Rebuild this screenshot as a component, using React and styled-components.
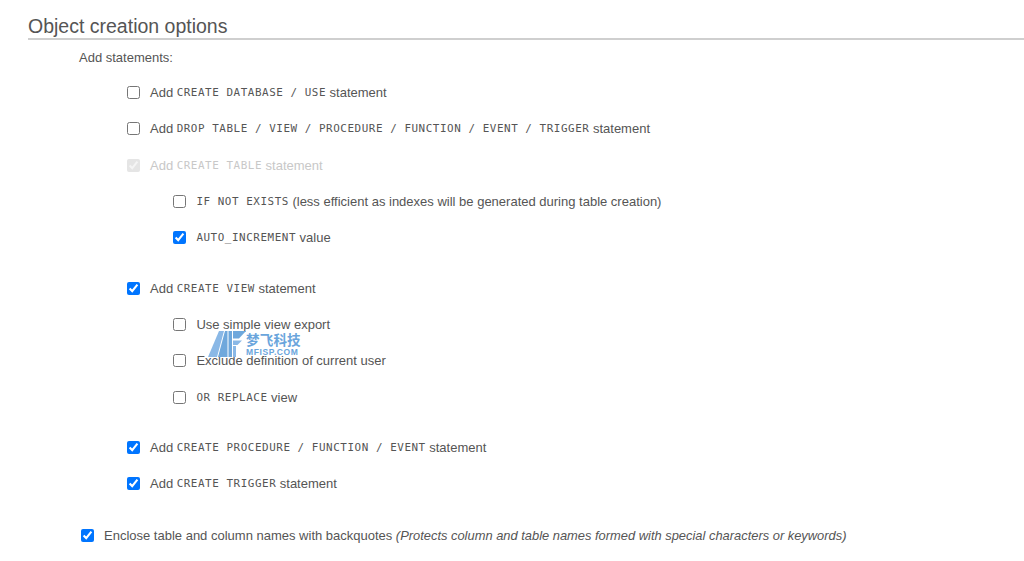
import React from "react";
import styled, { createGlobalStyle } from "styled-components";

const Global = createGlobalStyle`
  html, body { margin: 0; padding: 0; background: #fff; }
  body { font-family: "Liberation Sans", Arial, sans-serif; font-size: 13px; color: #555; overflow: hidden; }
`;
const Page = styled.div`
  position: relative;
  width: 1024px;
  height: 561px;
  overflow: hidden;
  padding: 14px 0 0 28px;
  box-sizing: border-box;
`;
const Heading = styled.h2`
  margin: 0;
  font-size: 19.5px;
  line-height: 24px;
  font-weight: 400;
  color: #555;
  border-bottom: 2px solid #cfcfcf;
`;
const Label = styled.div`
  margin: 10px 0 0 51px;
  line-height: 15px;
`;
const Group = styled.div`
  display: flex;
  flex-direction: column;
  margin: ${p => p.$top ?? 0}px 0 0 ${p => p.$left ?? 0}px;
`;
const Row = styled.label`
  display: flex;
  align-items: center;
  height: 20px;
  margin-bottom: ${p => p.$gap ?? 16.4}px;
  color: ${p => (p.$off ? "#c8c8c8" : "#555")};
  white-space: nowrap;
`;
const Box = styled.input.attrs({ type: "checkbox", readOnly: true })`
  width: 13px;
  height: 13px;
  margin: 0 10px 0 0;
  flex: none;
  ${p => p.disabled && "opacity: .55;"}
`;
const Code = styled.code`
  font-family: "DejaVu Sans Mono", monospace;
  font-size: 10.9px;
  letter-spacing: 0.56px;
  margin: 0 3.5px;
`;
const LeadCode = styled(Code)`
  margin-left: 0;
`;
const Note = styled.em`
  margin-left: 3.5px;
  font-size: 12.9px;
  font-style: italic;
`;
const Mark = styled.div`
  position: absolute;
  left: 208px;
  top: 331px;
  display: flex;
  gap: 0;
  pointer-events: none;
`;
const MarkText = styled.div`
  display: flex;
  flex-direction: column;
  color: #6aa5dc;
  font-weight: 700;
`;
const MarkCn = styled.span`
  font-family: "Noto Sans CJK SC", sans-serif;
  font-size: 13.5px;
  line-height: 17px;
  letter-spacing: .2px;
`;
const MarkEn = styled.span`
  font-size: 8.5px;
  line-height: 8px;
  letter-spacing: .6px;
`;

const C = ({ children }) => <Code>{children}</Code>;

export default function App() {
  return (
    <Page>
      <Global />
      <Heading>Object creation options</Heading>
      <Label>Add statements:</Label>
      <Group $top={17.3} $left={99}>
        <Row><Box />Add<C>CREATE DATABASE / USE</C>statement</Row>
        <Row><Box />Add<C>DROP TABLE / VIEW / PROCEDURE / FUNCTION / EVENT / TRIGGER</C>statement</Row>
        <Row $off><Box disabled defaultChecked />Add<C>CREATE TABLE</C>statement</Row>
        <Group $left={46.4}>
          <Row><Box /><LeadCode>IF NOT EXISTS</LeadCode>(less efficient as indexes will be generated during table creation)</Row>
          <Row $gap={30.4}><Box defaultChecked /><LeadCode>AUTO_INCREMENT</LeadCode>value</Row>
        </Group>
        <Row $gap={16}><Box defaultChecked />Add<C>CREATE VIEW</C>statement</Row>
        <Group $left={46.4}>
          <Row $gap={16}><Box />Use simple view export</Row>
          <Row $gap={17}><Box />Exclude definition of current user</Row>
          <Row $gap={30}><Box /><LeadCode>OR REPLACE</LeadCode>view</Row>
        </Group>
        <Row $gap={16.4}><Box defaultChecked />Add<C>CREATE PROCEDURE / FUNCTION / EVENT</C>statement</Row>
        <Row $gap={31.5}><Box defaultChecked />Add<C>CREATE TRIGGER</C>statement</Row>
      </Group>
      <Group $left={53}>
        <Row>
          <Box defaultChecked />
          Enclose table and column names with backquotes
          <Note>(Protects column and table names formed with special characters or keywords)</Note>
        </Row>
      </Group>
      <Mark>
        <svg width="38" height="26" viewBox="0 0 38 26" aria-hidden="true">
          <path d="M0 26 L11 0 H16 L9 26 Z" fill="#8ab8e6" />
          <path d="M10 26 L17 0 H19.5 V26 Z" fill="#6fa8dc" />
          <path d="M20.5 0 H24 V26 H20.5 Z" fill="#6fa8dc" />
          <path d="M25 0 H38 L31 7.5 H25 Z" fill="#6fa8dc" />
          <path d="M25 9.5 H34 L29.5 14 H25 Z" fill="#8ab8e6" />
          <path d="M25 15 H28 V26 H25 Z" fill="#8ab8e6" />
        </svg>
        <MarkText>
          <MarkCn>梦飞科技</MarkCn>
          <MarkEn>MFISP.COM</MarkEn>
        </MarkText>
      </Mark>
    </Page>
  );
}
